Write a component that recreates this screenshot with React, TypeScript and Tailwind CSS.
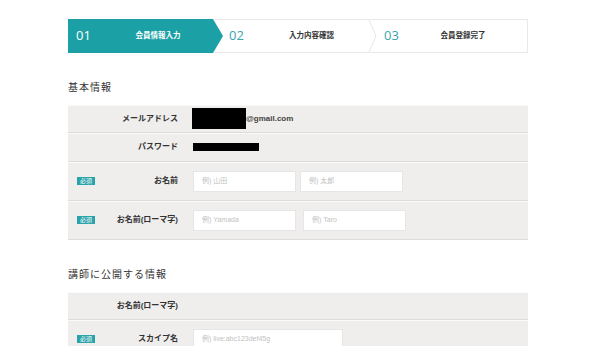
const jp = "font-['Liberation_Sans','Noto_Sans_CJK_JP',sans-serif]";

function Badge() {
  return (
    <span className="flex h-[8px] w-[18px] items-center justify-center bg-[#2aa3a8] text-[6px] leading-none text-white">
      必須
    </span>
  );
}

function Field({ ph, w = "w-[103px]" }: { ph: string; w?: string }) {
  return (
    <div className={`flex h-[21px] ${w} items-center border border-[#e6e6e6] bg-white pl-[8px] text-[7px] text-[#c2c2c2]`}>
      {ph}
    </div>
  );
}

function Row({
  label,
  required,
  h,
  children,
}: {
  label: string;
  required?: boolean;
  h: string;
  children?: React.ReactNode;
}) {
  return (
    <div className={`flex ${h} items-center border-b border-[#dcdbd9] shadow-[inset_0_1px_0_#fafafa]`}>
      <div className="flex w-[110px] items-center justify-between pl-[9px]">
        <span>{required && <Badge />}</span>
        <span className="text-[8px] font-bold text-[#333]">{label}</span>
      </div>
      <div className="flex items-center pl-[15px]">{children}</div>
    </div>
  );
}

export default function App() {
  return (
    <div className={`h-[346px] w-[600px] overflow-hidden bg-white ${jp}`}>
      <div className="ml-[68px] w-[460px] pt-[19px]">
        {/* steps */}
        <div className="flex h-[34px] border border-[#e9e9e9]">
          <div className="-my-px -ml-px flex h-[34px] w-[155px] shrink-0 items-center bg-[#1ba1a5] pl-[8px] text-white [clip-path:polygon(0_0,145px_0,100%_50%,145px_100%,0_100%)]">
            <span className="font-['Open_Sans',sans-serif] text-[13px]">01</span>
            <span className="flex-1 pl-[2px] text-center text-[7.5px] font-bold">会員情報入力</span>
          </div>
          <div className="relative -ml-[10px] flex w-[164px] shrink-0 items-center pl-[16px]">
            <span className="font-['Open_Sans',sans-serif] text-[13px] text-[#3aa5ac]">02</span>
            <span className="flex-1 pl-[2px] text-center text-[7.5px] font-bold text-[#333]">入力内容確認</span>
            <svg className="absolute right-0 top-0 h-[32px] w-[8px]" viewBox="0 0 8 32" fill="none">
              <polyline points="0,0 7,16 0,32" stroke="#e6e6e6" strokeWidth="1" />
            </svg>
          </div>
          <div className="flex flex-1 items-center pl-[7px]">
            <span className="font-['Open_Sans',sans-serif] text-[13px] text-[#3aa5ac]">03</span>
            <span className="flex-1 text-center text-[7.5px] font-bold text-[#333]">会員登録完了</span>
          </div>
        </div>

        <h2 className="mt-[27px] text-[10px] tracking-[1px] text-[#333]">基本情報</h2>
        <div className="mt-[10px] bg-[#efeeed]">
          <Row label="メールアドレス" h="h-[28px]">
            <span className="-ml-px h-[21px] w-[54px] bg-black" />
            <span className="text-[8px] font-bold text-[#444]">@gmail.com</span>
          </Row>
          <Row label="パスワード" h="h-[29px]">
            <span className="h-[8px] w-[66px] bg-black" />
          </Row>
          <Row label="お名前" required h="h-[39px]">
            <div className="flex gap-[4px]">
              <Field ph="例) 山田" />
              <Field ph="例) 太郎" />
            </div>
          </Row>
          <Row label="お名前(ローマ字)" required h="h-[39px]">
            <div className="flex gap-[7px]">
              <Field ph="例) Yamada" />
              <Field ph="例) Taro" />
            </div>
          </Row>
        </div>

        <h2 className="mt-[27px] text-[10px] tracking-[1px] text-[#333]">講師に公開する情報</h2>
        <div className="mt-[10px] bg-[#efeeed]">
          <Row label="お名前(ローマ字)" h="h-[28px]" />
          <Row label="スカイプ名" required h="h-[39px]">
            <Field ph="例) live:abc123def45g" w="w-[150px]" />
          </Row>
        </div>
      </div>
    </div>
  );
}
